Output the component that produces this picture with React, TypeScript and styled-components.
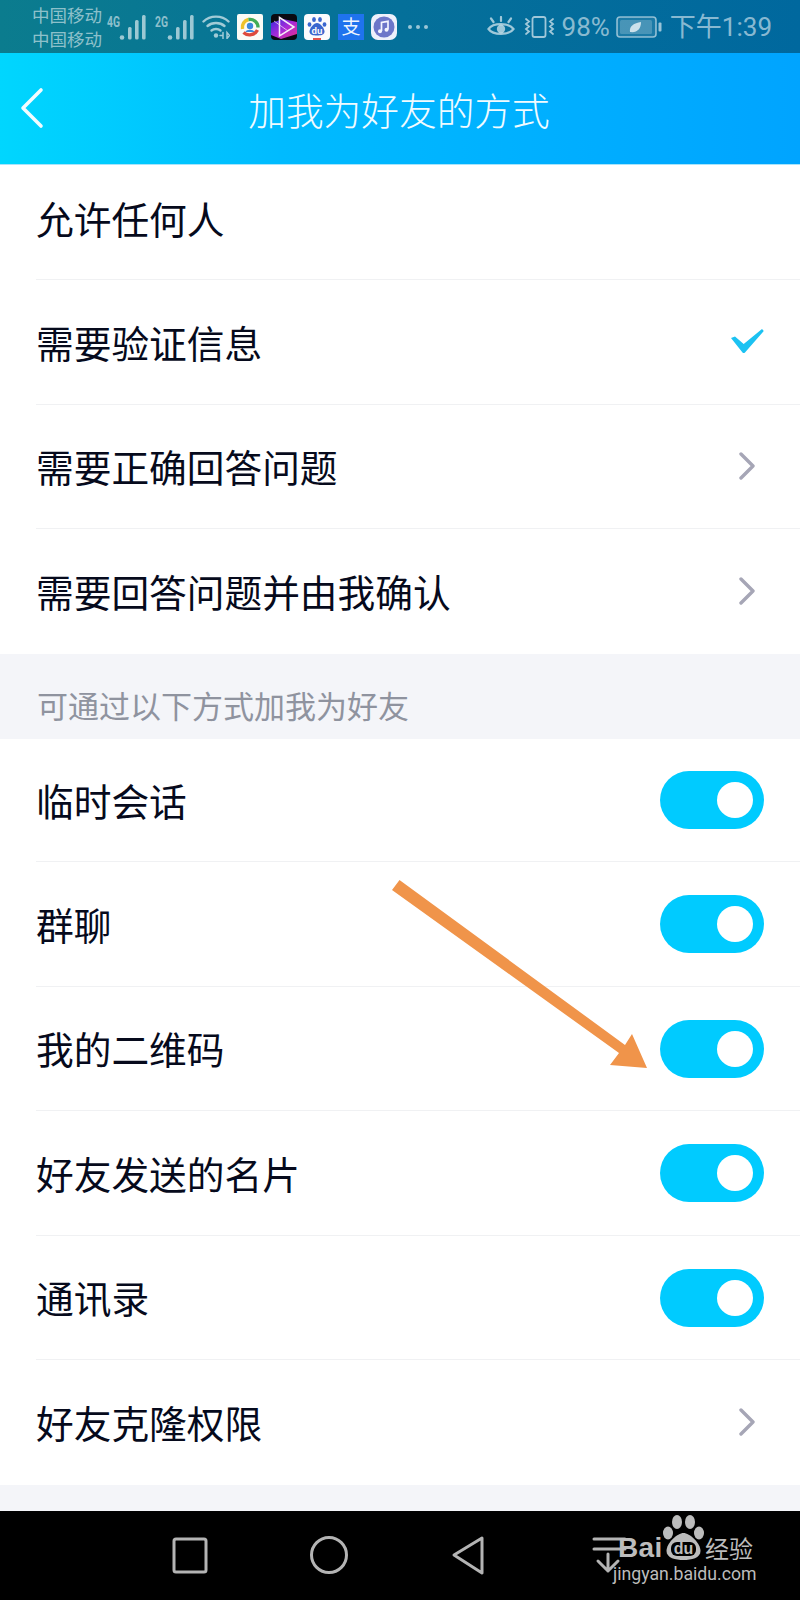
import React from "react";
import styled, { createGlobalStyle } from "styled-components";

const Global = createGlobalStyle`
  html, body { margin: 0; padding: 0; background: #000; }
  #root { width: 800px; height: 1600px; overflow: hidden; }
  * { box-sizing: border-box; }
`;
const FONT = `"Noto Sans CJK SC", "Noto Sans", sans-serif`;

const Screen = styled.div`
  position: relative;
  width: 800px;
  height: 1600px;
  display: flex;
  flex-direction: column;
  font-family: ${FONT};
  background: #f4f5f9;
`;
const StatusBar = styled.div`
  height: 53px;
  flex: none;
  display: flex;
  align-items: center;
  padding: 0 28px 0 32px;
  background: linear-gradient(90deg, #0b7c8e 0%, #05709a 50%, #00689e 100%);
  color: rgba(255, 255, 255, 0.55);
`;
const Carrier = styled.div`
  display: flex;
  flex-direction: column;
  font-size: 17.5px;
  line-height: 24px;
  width: 75px;
  flex: none;
`;
const SignalGroup = styled.div`
  display: flex;
  gap: 9px;
  align-items: center;
  margin-right: 8px;
`;
const SignalIcon = styled.svg`
  display: block;
  overflow: visible;
  flex: none;
`;
const Apps = styled.div`
  display: flex;
  gap: 7.5px;
  align-items: center;
`;
const AppIcon = styled.svg`
  width: 26px;
  height: 26px;
  display: block;
  flex: none;
`;
const Dots = styled.div`
  display: flex;
  gap: 4px;
  margin-left: 11px;
  span {
    width: 4px;
    height: 4px;
    border-radius: 50%;
    background: rgba(255, 255, 255, 0.6);
  }
`;
const Right = styled.div`
  margin-left: auto;
  display: flex;
  align-items: center;
  gap: 6px;
`;
const StatusText = styled.span`
  font-family: "Roboto", ${FONT};
  font-size: 26px;
  line-height: 30px;
  white-space: nowrap;
  color: rgba(255, 255, 255, 0.55);
`;
const Header = styled.header`
  height: 112px;
  flex: none;
  display: flex;
  align-items: center;
  justify-content: center;
  position: relative;
  background: linear-gradient(90deg, #00d6fe 0%, #00bbff 35%, #00a4ff 100%);
  border-bottom: 1px solid #a8e4fb;
`;
const BackIcon = styled.svg`
  position: absolute;
  left: 19px;
  top: 33px;
`;
const Title = styled.h1`
  margin: 0 2px 0 0;
  font-size: 37.7px;
  font-weight: 300;
  line-height: 50px;
  color: #f0fbff;
`;
const Group = styled.section`
  background: #fff;
  flex: none;
`;
const Row = styled.div<{ $h: number; $last?: boolean }>`
  height: ${(p) => p.$h}px;
  margin-left: 36px;
  padding-right: 36px;
  display: flex;
  align-items: center;
  justify-content: space-between;
  border-bottom: ${(p) => (p.$last ? "none" : "1px solid #f0f1f3")};
`;
const Label = styled.span<{ $shift?: number }>`
  font-size: 37.7px;
  font-weight: 400;
  line-height: 50px;
  color: #060a1c;
  position: relative;
  top: ${(p) => p.$shift ?? 0}px;
`;
const SectionHead = styled.div`
  height: 85px;
  flex: none;
  padding: 18px 0 0 37px;
  font-size: 31px;
  line-height: 60px;
  color: #8f939f;
  background: #f4f5f9;
  display: flex;
  align-items: center;
`;
const Toggle = styled.div`
  width: 104px;
  height: 58px;
  border-radius: 29px;
  background: #00cbff;
  display: flex;
  align-items: center;
  justify-content: flex-end;
  padding-right: 11px;
  margin-top: 1px;
  flex: none;
  &::after {
    content: "";
    width: 36px;
    height: 36px;
    border-radius: 50%;
    background: #fff;
  }
`;
const Check = styled.svg`
  display: block;
`;
const Chevron = styled.svg`
  display: block;
  margin-right: 9px;
`;
const Footer = styled.div`
  flex: 1;
  background: #f4f5f9;
`;
const NavBar = styled.nav`
  height: 89px;
  flex: none;
  background: #000;
  display: flex;
  align-items: center;
  position: relative;
`;
const NavArt = styled.svg`
  position: absolute;
  left: 0;
  top: 0;
`;
const Watermark = styled.div`
  position: absolute;
  left: 613px;
  top: 1515px;
  width: 145px;
  color: #bcbcbc;
  font-family: "Liberation Sans", ${FONT};
`;
const WmTop = styled.div`
  display: flex;
  align-items: flex-end;
  height: 45px;
  padding-left: 5px;
`;
const WmBai = styled.span`
  width: 45px;
  flex: none;
  font-size: 28px;
  font-weight: 700;
  line-height: 28px;
  letter-spacing: 0.4px;
  margin-bottom: -2px;
`;
const WmJy = styled.span`
  font-size: 24px;
  line-height: 24px;
  margin-left: 1px;
  font-family: ${FONT};
  white-space: nowrap;
`;
const WmUrl = styled.div`
  font-family: "Roboto", ${FONT};
  font-size: 18.5px;
  line-height: 20px;
  margin-top: 4px;
  white-space: nowrap;
  transform: scaleX(0.955);
  transform-origin: left;
`;
const ArrowArt = styled.svg`
  position: absolute;
  left: 380px;
  top: 870px;
`;

const BAR = "rgba(255,255,255,.6)";

const Signal = ({ tag }: { tag: string }) => (
  <SignalIcon width="39" height="26" viewBox="0 0 39 26">
    <text x="0" y="13" fontSize="15" fontWeight="700" textLength="13" lengthAdjust="spacingAndGlyphs" fontFamily="Roboto, sans-serif" fill="rgba(255,255,255,.55)">{tag}</text>
    <g fill={BAR}>
      <circle cx="15" cy="23.500" r="2.300" />
      <rect x="21" y="13" width="3.600" height="12.500" rx="1.500" />
      <rect x="28" y="6" width="3.600" height="19.500" rx="1.500" />
      <rect x="35" y="1" width="3.600" height="24.500" rx="1.500" />
    </g>
  </SignalIcon>
);

const Wifi = () => (
  <svg width="28" height="25" viewBox="0 0 28 25" fill="none" stroke="rgba(255,255,255,.62)" strokeWidth="2.400" strokeLinecap="round" style={{ marginRight: 7 }}>
    <path d="M1.500 7.500C8 1 20 1 26.500 7.500" />
    <path d="M5.500 12C10 8 18 8 22.500 12" />
    <path d="M9.500 16.500C12 14.500 16 14.500 18.500 16.500" />
    <circle cx="14" cy="21.500" r="2.200" fill="rgba(255,255,255,.62)" stroke="none" />
    <path d="M18 21.500h3M21 18.500v6M25 18.500v6l2.500-3z" strokeWidth="1.500" />
  </svg>
);

const Tencent = () => (
  <AppIcon viewBox="0 0 26 26">
    <rect width="26" height="26" rx="2" fill="#fbfbf6" />
    <path d="M5.500 15a8 8 0 0 1 6-9.500" stroke="#eec22c" strokeWidth="3.400" fill="none" />
    <path d="M11.500 5.500a8 8 0 0 1 9.500 8" stroke="#41ac55" strokeWidth="3.400" fill="none" />
    <path d="M20.500 16a9 9 0 0 1-14 2.500" stroke="#dd4a3c" strokeWidth="3.400" fill="none" />
    <circle cx="13" cy="12" r="3.200" fill="#3a88dc" />
    <path d="M8.500 18c.5-3 8-3 9 0z" fill="#3a88dc" />
  </AppIcon>
);
const Bili = () => (
  <AppIcon viewBox="0 0 26 26">
    <defs>
      <linearGradient id="bl" x1="0" y1="0" x2="1" y2="1">
        <stop offset="0" stopColor="#3a2be0" />
        <stop offset=".5" stopColor="#a82bd8" />
        <stop offset="1" stopColor="#e8308c" />
      </linearGradient>
    </defs>
    <rect width="26" height="26" rx="4" fill="#0a0a12" />
    <path d="M0 9L12 5L26 8V20L10 25L0 21Z" fill="url(#bl)" />
    <path d="M8.500 3.500L23 13L8.500 22Z" fill="none" stroke="#f5ecf8" strokeWidth="1.500" />
    <path d="M3 7L17 17" stroke="#f5ecf8" strokeWidth="1" opacity=".7" />
  </AppIcon>
);
const BaiduApp = () => (
  <AppIcon viewBox="0 0 26 26">
    <rect width="26" height="26" rx="4" fill="#fbfbfd" />
    <g fill="#3a66cf">
      <ellipse cx="10" cy="5.500" rx="1.900" ry="2.500" />
      <ellipse cx="16" cy="5.500" rx="1.900" ry="2.500" />
      <ellipse cx="5.500" cy="10.500" rx="1.900" ry="2.300" />
      <ellipse cx="20.500" cy="10.500" rx="1.900" ry="2.300" />
      <path d="M13 9c3 0 7.500 5 7.500 8.500S17 21.500 13 21.500s-7.500-.5-7.500-4S10 9 13 9z" />
    </g>
    <text x="13" y="20" textAnchor="middle" fontSize="9" fontWeight="700" fontFamily="Liberation Sans, sans-serif" fill="#fff">du</text>
    <rect x="9" y="24" width="8" height="2" fill="#e4504a" />
  </AppIcon>
);
const Alipay = () => (
  <AppIcon viewBox="0 0 26 26">
    <rect width="26" height="26" fill="#1f73ee" />
    <text x="13" y="20" textAnchor="middle" fontSize="19" fontFamily={FONT} fill="#eef5ff">支</text>
  </AppIcon>
);
const Music = () => (
  <AppIcon viewBox="0 0 26 26">
    <rect width="26" height="26" rx="7" fill="#eef0fb" />
    <circle cx="13" cy="13" r="10.500" fill="#6d76c9" />
    <path d="M10.500 17V8.500l6.500-1.200V15.500" stroke="#f4f5ff" strokeWidth="1.700" fill="none" />
    <circle cx="9" cy="17.200" r="2" fill="#f4f5ff" />
    <circle cx="15.500" cy="15.700" r="2" fill="#f4f5ff" />
  </AppIcon>
);
const Eye = () => (
  <svg width="28" height="22" viewBox="0 0 28 22" fill="none" stroke="rgba(255,255,255,.62)" strokeWidth="2.200" strokeLinecap="round" style={{ marginRight: 2 }}>
    <path d="M1.500 13C6 6.500 22 6.500 26.500 13C22 19.500 6 19.500 1.500 13Z" />
    <circle cx="14" cy="13" r="4.200" fill="rgba(255,255,255,.62)" stroke="none" />
    <path d="M4 2.500L6.500 6M14 1v4M24 2.500L21.500 6" />
  </svg>
);
const Vibrate = () => (
  <svg width="33" height="22" viewBox="0 0 33 22" fill="none" stroke="rgba(255,255,255,.62)" strokeWidth="1.800" strokeLinecap="round">
    <rect x="9.500" y="1" width="13" height="20" rx="2" />
    <path d="M3 3l3 2.500-3 2.500 3 2.500-3 2.500 3 2.500-3 2.500M30 3l-3 2.500 3 2.500-3 2.500 3 2.500-3 2.500 3 2.500" />
  </svg>
);
const Battery = () => (
  <svg width="46" height="22" viewBox="0 0 46 22" style={{ marginRight: 2 }}>
    <rect x="1" y="1" width="39" height="20" rx="3" fill="rgba(255,255,255,.1)" stroke="rgba(255,255,255,.55)" strokeWidth="1.600" />
    <rect x="4" y="4" width="32" height="14" rx="1.500" fill="rgba(255,255,255,.2)" />
    <rect x="42.500" y="6.500" width="3" height="9" rx="1" fill="rgba(255,255,255,.6)" />
    <path d="M14 16c-1-6 4-9 11-10 0 7-4 11-11 10z" fill="rgba(255,255,255,.72)" />
  </svg>
);

const CheckMark = () => (
  <Check width="33" height="25" viewBox="0 0 33 25">
    <path d="M0 9L4 7.500L12.700 15L31 0L32.800 2L14 23.500Q12.700 24.500 11.500 23.500Z" fill="#1cc2f2" />
  </Check>
);
const Arrow = () => (
  <Chevron width="16" height="28" viewBox="0 0 16 28" fill="none" stroke="#a6a6b6" strokeWidth="3.400" strokeLinecap="round" strokeLinejoin="round">
    <path d="M2 2L14 14L2 26" />
  </Chevron>
);

const group1: { label: string; h: number; right?: React.ReactNode; last?: boolean; shift?: number }[] = [
  { label: "允许任何人", h: 115, shift: -4.5 },
  { label: "需要验证信息", h: 124.5, right: <CheckMark />, shift: 0.5 },
  { label: "需要正确回答问题", h: 124.5, right: <Arrow /> },
  { label: "需要回答问题并由我确认", h: 124.5, right: <Arrow />, last: true },
];
const group2: { label: string; h: number; arrow?: boolean; last?: boolean }[] = [
  { label: "临时会话", h: 123.5 },
  { label: "群聊", h: 124.5 },
  { label: "我的二维码", h: 124.5 },
  { label: "好友发送的名片", h: 124.5 },
  { label: "通讯录", h: 124.5 },
  { label: "好友克隆权限", h: 124.5, arrow: true, last: true },
];

export default function App() {
  return (
    <Screen>
      <Global />
      <StatusBar>
        <Carrier>
          <span>中国移动</span>
          <span>中国移动</span>
        </Carrier>
        <SignalGroup>
          <Signal tag="4G" />
          <Signal tag="2G" />
        </SignalGroup>
        <Wifi />
        <Apps>
          <Tencent />
          <Bili />
          <BaiduApp />
          <Alipay />
          <Music />
        </Apps>
        <Dots>
          <span />
          <span />
          <span />
        </Dots>
        <Right>
          <Eye />
          <Vibrate />
          <StatusText>98%</StatusText>
          <Battery />
          <StatusText>下午1:39</StatusText>
        </Right>
      </StatusBar>
      <Header>
        <BackIcon width="26" height="44" viewBox="0 0 26 44" fill="none" stroke="#f2fcff" strokeWidth="3.600" strokeLinecap="round" strokeLinejoin="round">
          <path d="M22 4L4 22L22 40" />
        </BackIcon>
        <Title>加我为好友的方式</Title>
      </Header>
      <Group>
        {group1.map((r) => (
          <Row key={r.label} $h={r.h} $last={r.last}>
            <Label $shift={r.shift}>{r.label}</Label>
            {r.right}
          </Row>
        ))}
      </Group>
      <SectionHead>可通过以下方式加我为好友</SectionHead>
      <Group>
        {group2.map((r) => (
          <Row key={r.label} $h={r.h} $last={r.last}>
            <Label>{r.label}</Label>
            {r.arrow ? <Arrow /> : <Toggle />}
          </Row>
        ))}
      </Group>
      <Footer />
      <NavBar>
        <NavArt width="640" height="89" viewBox="0 1511 640 89" fill="none" stroke="#b4b4b4" strokeWidth="3" strokeLinejoin="round" strokeLinecap="round">
          <rect x="174" y="1539" width="32" height="33" rx="2" />
          <circle cx="329" cy="1555" r="17.500" />
          <path d="M482 1538L454 1555L482 1573Z" />
          <path d="M594 1539H625M594 1549H625M608 1554V1571M598 1561L608 1571L618 1561" />
        </NavArt>
      </NavBar>
      <ArrowArt width="280" height="210" viewBox="380 870 280 210">
        <path d="M392 890L399.500 880L625 1045L632 1034L647 1068L610 1065L619 1053Z" fill="#f0944a" />
      </ArrowArt>
      <Watermark>
        <WmTop>
          <WmBai>Bai</WmBai>
          <svg width="41" height="45" viewBox="0 0 41 45" style={{ flex: "none" }}>
            <g fill="#bcbcbc">
              <ellipse cx="14" cy="7" rx="5" ry="7" />
              <ellipse cx="27" cy="7" rx="5" ry="7" />
              <ellipse cx="5" cy="18" rx="5" ry="6.500" />
              <ellipse cx="36" cy="18" rx="5" ry="6.500" />
              <path d="M20.500 18c6 0 17 10 17 18 0 7-9 9-17 9s-17-2-17-9c0-8 11-18 17-18z" />
            </g>
            <rect x="8" y="27" width="25" height="14" rx="6" fill="#000" />
            <text x="20.500" y="39" textAnchor="middle" fontSize="16" fontWeight="700" fontFamily="Liberation Sans, sans-serif" fill="#bcbcbc">du</text>
          </svg>
          <WmJy>经验</WmJy>
        </WmTop>
        <WmUrl>jingyan.baidu.com</WmUrl>
      </Watermark>
    </Screen>
  );
}
